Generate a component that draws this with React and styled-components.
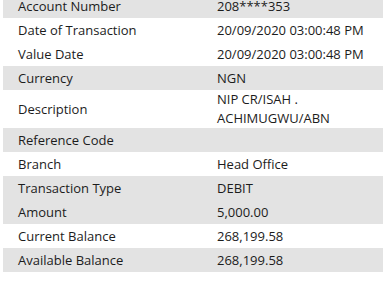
import React from 'react';
import styled, { createGlobalStyle } from 'styled-components';

const GlobalStyle = createGlobalStyle`
  html, body {
    margin: 0;
    padding: 0;
    background: #ffffff;
    overflow: hidden;
  }
`;

const Table = styled.div`
  margin: -6px 0 0 3px;
  display: flex;
  flex-direction: column;
  font-family: "Open Sans", "Noto Sans", sans-serif;
  font-size: 13px;
  color: #1c1c1c;
`;

const Row = styled.div`
  display: grid;
  grid-template-columns: 214px 1fr;
  align-items: center;
  min-height: 24px;
  background: ${p => (p.shaded ? '#e3e3e3' : '#ffffff')};
`;

const Label = styled.div`
  padding-left: 15px;
  line-height: 19px;
`;

const Value = styled.div`
  line-height: 19px;
  padding-right: 8px;
`;

const rows = [
  { label: 'Account Number', value: '208****353', shaded: true },
  { label: 'Date of Transaction', value: '20/09/2020 03:00:48 PM' },
  { label: 'Value Date', value: '20/09/2020 03:00:48 PM' },
  { label: 'Currency', value: 'NGN', shaded: true },
  { label: 'Description', value: ['NIP CR/ISAH .', 'ACHIMUGWU/ABN'] },
  { label: 'Reference Code', value: '', shaded: true },
  { label: 'Branch', value: 'Head Office' },
  { label: 'Transaction Type', value: 'DEBIT', shaded: true },
  { label: 'Amount', value: '5,000.00', shaded: true },
  { label: 'Current Balance', value: '268,199.58' },
  { label: 'Available Balance', value: '268,199.58', shaded: true },
];

export default function App() {
  return (
    <>
      <GlobalStyle />
      <Table>
        {rows.map(row => (
          <Row key={row.label} shaded={row.shaded}>
            <Label>{row.label}</Label>
            <Value>
              {Array.isArray(row.value)
                ? row.value.map(line => <div key={line}>{line}</div>)
                : row.value}
            </Value>
          </Row>
        ))}
      </Table>
    </>
  );
}
